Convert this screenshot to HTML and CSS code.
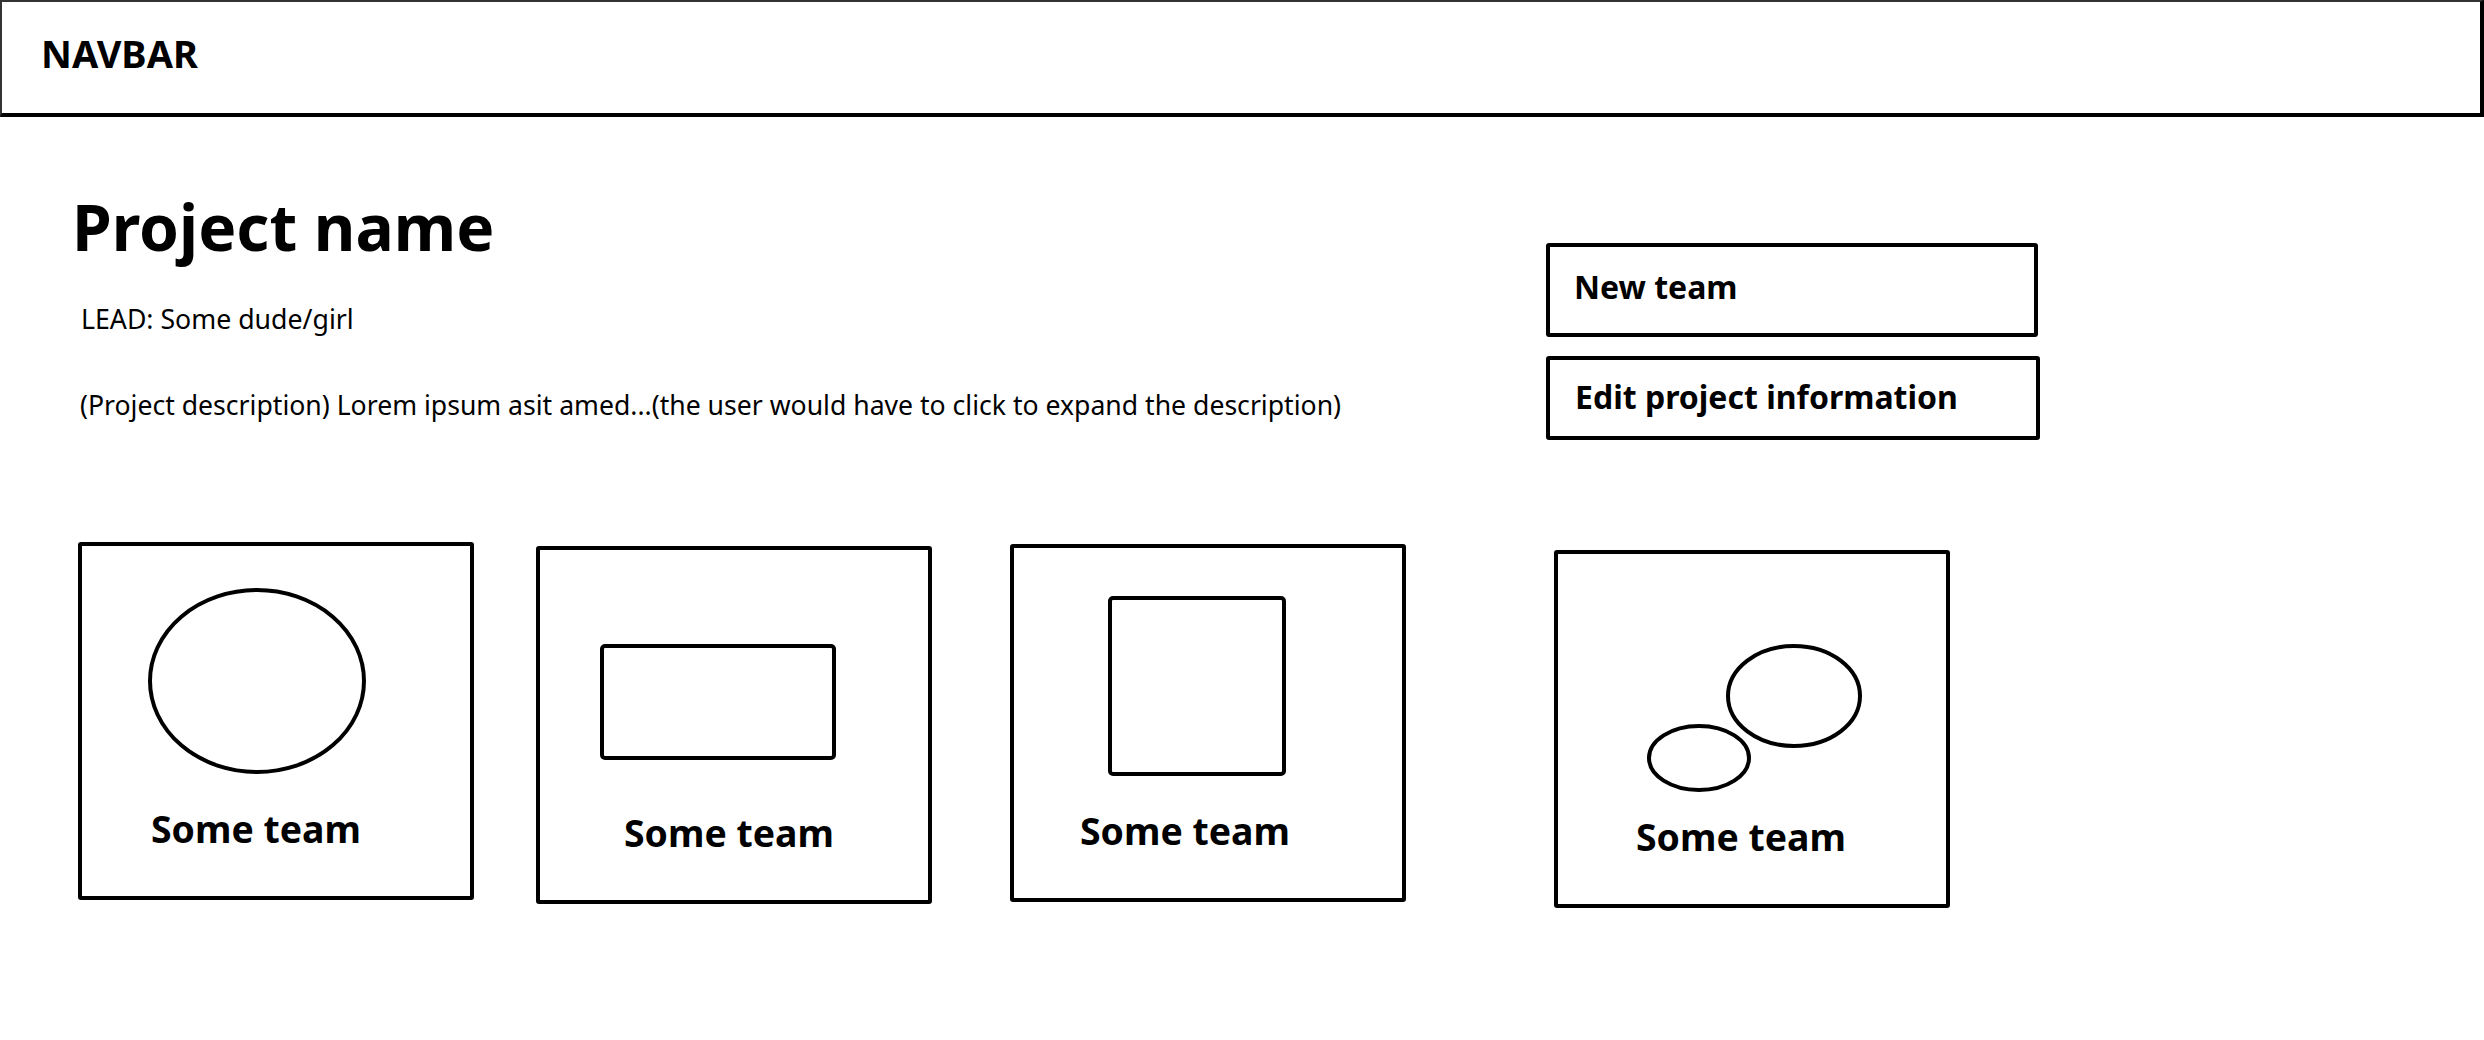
FILE: index.html
```html
<!DOCTYPE html>
<html lang="en">
<head>
<meta charset="utf-8">
<title>Project</title>
<link rel="stylesheet" href="styles.css">
</head>
<body>
<header class="navbar"><span class="navbar-title">NAVBAR</span></header>
<main class="page">
  <section class="project-head">
    <div class="project-info">
      <h1 class="project-name">Project name</h1>
      <p class="project-lead">LEAD: Some dude/girl</p>
      <p class="project-desc">(Project description) Lorem ipsum asit amed...(the user would have to click to expand the description)</p>
    </div>
    <div class="actions">
      <button class="btn btn-new">New team</button>
      <button class="btn btn-edit">Edit project information</button>
    </div>
  </section>
  <section class="teams">
    <div class="card card-1">
      <svg class="card-art" width="388" height="264" viewBox="0 0 388 264"><ellipse cx="175" cy="135" rx="107" ry="91"/></svg>
      <div class="card-label">Some team</div>
    </div>
    <div class="card card-2">
      <svg class="card-art" width="388" height="264" viewBox="0 0 388 264"><rect x="62" y="96" width="232" height="112" rx="3"/></svg>
      <div class="card-label">Some team</div>
    </div>
    <div class="card card-3">
      <svg class="card-art" width="388" height="264" viewBox="0 0 388 264"><rect x="96" y="50" width="174" height="176" rx="3"/></svg>
      <div class="card-label">Some team</div>
    </div>
    <div class="card card-4">
      <svg class="card-art" width="388" height="264" viewBox="0 0 388 264"><ellipse cx="236" cy="142" rx="66" ry="50"/><ellipse cx="141" cy="204" rx="50" ry="32"/></svg>
      <div class="card-label">Some team</div>
    </div>
  </section>
</main>
</body>
</html>
```
FILE: styles.css
```css
html, body {
  margin: 0;
  padding: 0;
  background: #fff;
}
body {
  font-family: "Noto Sans", "Open Sans", sans-serif;
  color: #000;
  width: 2484px;
  height: 1040px;
  overflow: hidden;
}
.navbar {
  box-sizing: border-box;
  height: 117px;
  border-top: 2px solid #333;
  border-left: 2px solid #333;
  border-right: 4px solid #000;
  border-bottom: 4px solid #000;
  padding: 32px 0 0 39px;
}
.navbar-title {
  display: block;
  font-size: 38px;
  line-height: 1;
  font-weight: 700;
}
.page {
  padding-left: 66px;
}
.project-head {
  display: flex;
  align-items: flex-start;
  padding-top: 78px;
}
.project-info {
  box-sizing: border-box;
  width: 1480px;
  padding-left: 6px;
}
.project-name {
  margin: 0;
  font-size: 64px;
  line-height: 1;
  font-weight: 700;
}
.project-lead {
  margin: 47px 0 0 0;
  padding-left: 9px;
  font-size: 26.7px;
  line-height: 1;
}
.project-desc {
  margin: 59px 0 0 0;
  padding-left: 8px;
  font-size: 26.6px;
  line-height: 1;
  white-space: nowrap;
}
.actions {
  display: flex;
  flex-direction: column;
  gap: 19px;
  margin-top: 48px;
}
.btn {
  box-sizing: border-box;
  display: block;
  background: #fff;
  border: 4px solid #000;
  border-radius: 3px;
  font-family: inherit;
  font-size: 32px;
  line-height: 1;
  font-weight: 700;
  color: #000;
  text-align: left;
  margin: 0;
}
.btn-new {
  width: 492px;
  height: 94px;
  padding: 0 0 6px 24px;
}
.btn-edit {
  width: 494px;
  height: 84px;
  padding: 0 0 2px 25px;
}
.teams {
  display: flex;
  align-items: flex-start;
  margin-top: 102px;
  margin-left: 12px;
}
.card {
  box-sizing: border-box;
  width: 396px;
  height: 358px;
  border: 4px solid #000;
  border-radius: 3px;
  display: flex;
  flex-direction: column;
}
.card-art {
  display: block;
  fill: none;
  stroke: #000;
  stroke-width: 4;
}
.card-label {
  font-size: 37.4px;
  line-height: 1;
  font-weight: 700;
  white-space: nowrap;
}
.card-1 .card-label { padding-left: 69px; }
.card-2 { margin-left: 62px; margin-top: 4px; }
.card-2 .card-label { padding-left: 84px; }
.card-3 { margin-left: 78px; margin-top: 2px; }
.card-3 .card-label { padding-left: 66px; }
.card-4 { margin-left: 148px; margin-top: 8px; }
.card-4 .card-label { padding-left: 78px; }
```
